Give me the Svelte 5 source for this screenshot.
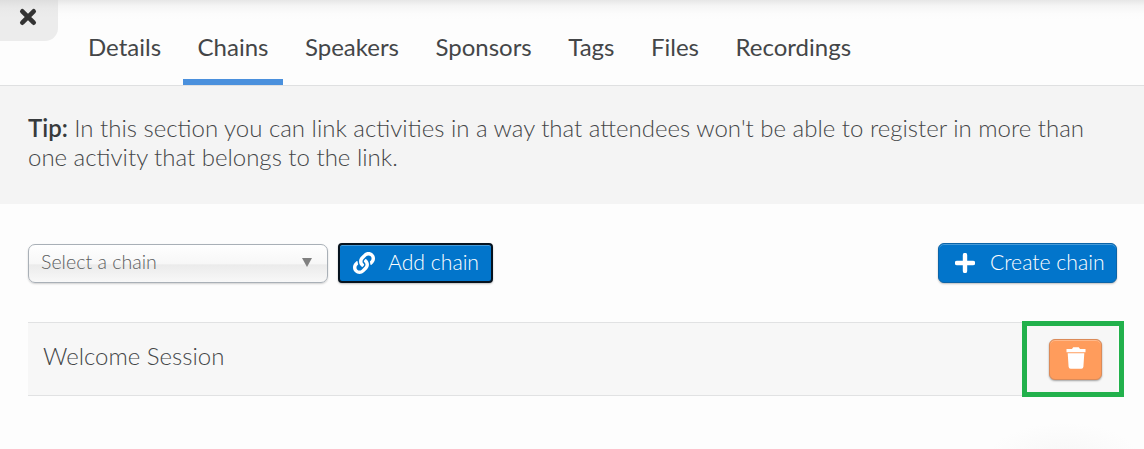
<script lang="ts">
  const tabs = ['Details', 'Chains', 'Speakers', 'Sponsors', 'Tags', 'Files', 'Recordings'];

  let activeTab = $state('Chains');
  let chains = $state(['Welcome Session']);

  function removeChain(name: string) {
    chains = chains.filter((chain) => chain !== name);
  }
</script>

<div class="panel">
  <header>
    <button class="close" aria-label="Close">
      <svg width="18" height="18" viewBox="0 0 18 18">
        <path d="M3.3 3.3 14.7 14.7M14.7 3.3 3.3 14.7" />
      </svg>
    </button>
    <nav>
      {#each tabs as tab}
        <button class="tab" class:active={tab === activeTab} onclick={() => (activeTab = tab)}>
          {tab}
        </button>
      {/each}
    </nav>
  </header>

  <p class="tip">
    <strong>Tip:</strong> In this section you can link activities in a way that attendees won't be able to register in more than one activity that belongs to the link.
  </p>

  <main>
    <div class="toolbar">
      <button class="select">
        <span>Select a chain</span>
        <svg width="10" height="9" viewBox="0 0 10 9"><path d="M0 0h10L5 9z" /></svg>
      </button>
      <button class="btn add">
        <svg width="22" height="22" viewBox="0 0 512 512">
          <path
            d="M326.612 185.391c59.747 59.809 58.927 155.698.36 214.59-.11.12-.24.25-.36.37l-67.2 67.2c-59.27 59.27-155.699 59.262-214.96 0-59.27-59.26-59.27-155.7 0-214.96l37.106-37.106c9.84-9.84 26.786-3.3 27.294 10.606.648 17.722 3.826 35.527 9.69 52.721 1.986 5.822.567 12.262-3.783 16.612l-13.087 13.087c-28.026 28.026-28.905 73.66-1.155 101.96 28.024 28.579 74.086 28.749 102.325.51l67.2-67.19c28.191-28.191 28.073-73.757 0-101.83-3.701-3.694-7.429-6.564-10.341-8.569a16.037 16.037 0 0 1-6.947-12.606c-.396-10.567 3.348-21.456 11.698-29.806l21.054-21.055c5.521-5.521 14.182-6.199 20.584-1.731a152.482 152.482 0 0 1 20.522 17.197zM467.547 44.449c-59.261-59.262-155.69-59.27-214.96 0l-67.2 67.2c-.12.12-.25.25-.36.37-58.566 58.892-59.387 154.781.36 214.59a152.454 152.454 0 0 0 20.521 17.196c6.402 4.468 15.064 3.789 20.584-1.731l21.054-21.055c8.35-8.35 12.094-19.239 11.698-29.806a16.037 16.037 0 0 0-6.947-12.606c-2.912-2.005-6.64-4.875-10.341-8.569-28.073-28.073-28.191-73.639 0-101.83l67.2-67.19c28.239-28.239 74.3-28.069 102.325.51 27.75 28.3 26.872 73.934-1.155 101.96l-13.087 13.087c-4.35 4.35-5.769 10.79-3.783 16.612 5.864 17.194 9.042 34.999 9.69 52.721.509 13.906 17.454 20.446 27.294 10.606l37.106-37.106c59.271-59.259 59.271-155.699.001-214.959z"
          />
        </svg>
        <span>Add chain</span>
      </button>
      <button class="btn create">
        <svg width="20" height="20" viewBox="0 0 20 20">
          <path d="M10 2v16M2 10h16" />
        </svg>
        <span>Create chain</span>
      </button>
    </div>

    <ul>
      {#each chains as chain}
        <li>
          <span>{chain}</span>
          <div class="highlight">
            <button class="delete" aria-label="Delete chain" onclick={() => removeChain(chain)}>
              <svg width="20" height="24" viewBox="0 0 20 24">
                <path d="M.5 3H6l1.2-1.8h5.6L14 3h5.5v3.2H.5zM1.7 7.3h16.6l-.9 13.5q-.2 2-2 2H4.6q-1.8 0-2-2z" />
              </svg>
            </button>
          </div>
        </li>
      {/each}
    </ul>
  </main>
</div>

<style>
  :global(body) {
    margin: 0;
    overflow: hidden;
    background: #fdfdfd;
  }

  .panel {
    height: 449px;
    box-sizing: border-box;
    font-family: Lato, sans-serif;
    font-weight: 300;
    color: #444648;
    background: radial-gradient(ellipse 75px 34px at 1064px 457px, #f7f7f7, #fdfdfd);
  }

  button {
    margin: 0;
    font: inherit;
    color: inherit;
    cursor: pointer;
  }

  header {
    display: flex;
    align-items: flex-start;
    height: 85px;
    border-bottom: 1px solid #dfe0e1;
    background: linear-gradient(#e6e6e6, #f5f5f5 6px, #fcfcfc 14px, #fdfdfd 20px);
  }

  .close {
    display: flex;
    width: 58px;
    height: 41px;
    padding: 8px 0 0 19px;
    border: 0;
    border-bottom-right-radius: 13px;
    background: linear-gradient(#dedede, #e9e9e9 8px, #ececec 18px);
  }

  .close path {
    fill: none;
    stroke: #333;
    stroke-width: 4.6;
    stroke-linecap: round;
  }

  nav {
    display: flex;
    gap: 7px;
    margin-left: 15.25px;
  }

  .tab {
    height: 85px;
    padding: 14px 14.75px 0;
    border: 0;
    border-bottom: 6px solid transparent;
    background: none;
    font-size: 24px;
    font-weight: 400;
  }

  .tab.active {
    border-bottom-color: #4a90dd;
  }

  .tip {
    height: 118px;
    box-sizing: border-box;
    margin: 0;
    padding: 27px 28px 0;
    background: #f4f4f4;
    font-size: 24px;
    line-height: 29px;
  }

  .tip strong {
    font-weight: 600;
    color: #373a3c;
  }

  main {
    padding: 39px 27px 0 28px;
  }

  .toolbar {
    display: flex;
    gap: 10px;
    height: 40px;
  }

  .select {
    display: flex;
    align-items: center;
    justify-content: space-between;
    width: 300px;
    height: 39px;
    margin-top: 1px;
    padding: 0 15px 3px 12px;
    border: 1px solid #a9b0b7;
    border-radius: 7px;
    background: linear-gradient(#fff 0%, #f7f7f7 50%, #ebebeb 54%, #f8f8f8 100%);
    box-shadow: 0 1px 2px rgba(0, 0, 0, 0.18);
    color: #5c5e60;
    font-size: 19.6px;
  }

  .select span {
    padding-bottom: 2px;
  }

  .select path {
    fill: #808080;
  }

  .btn {
    display: flex;
    align-items: center;
    height: 40px;
    border: 1px solid #0b64a8;
    border-radius: 6px;
    background: #0275cb;
    box-shadow: inset 0 1px 0 #479bd8, 0 1px 2px rgba(0, 0, 0, 0.25);
    color: #fff;
    font-size: 21.2px;
  }

  .btn span {
    padding-bottom: 1px;
  }

  .add {
    gap: 13px;
    width: 155px;
    padding: 0 0 1px 13px;
    border: 2px solid #06131f;
    border-radius: 4px;
  }

  .add path {
    fill: #fff;
  }

  .create {
    gap: 15px;
    width: 179px;
    margin-left: auto;
    padding: 0 0 1px 16px;
  }

  .create path {
    fill: none;
    stroke: #fff;
    stroke-width: 4.4;
    stroke-linecap: round;
  }

  ul {
    margin: 39px 0 0;
    padding: 0;
    list-style: none;
  }

  li {
    display: flex;
    align-items: center;
    justify-content: space-between;
    height: 72px;
    padding-left: 15px;
    border: solid #e1e2e3;
    border-width: 1px 0;
    background: #f7f7f7;
    font-size: 24px;
  }

  li span {
    padding-bottom: 8px;
  }

  .highlight {
    display: flex;
    align-items: center;
    box-sizing: border-box;
    width: 102px;
    height: 76px;
    margin-right: -7px;
    padding-left: 22px;
    border: 5px solid #22b14c;
    background: linear-gradient(90deg, #f7f7f7 90px, #fbfbfb 90px);
  }

  .delete {
    display: flex;
    align-items: flex-start;
    justify-content: center;
    width: 53px;
    height: 41px;
    padding: 6px 0 0;
    border: 1px solid #db8b59;
    border-radius: 6px;
    background: #ff9c5c;
    box-shadow: inset 0 1px 0 #ffb98b, 0 1px 2px rgba(0, 0, 0, 0.35);
  }

  .delete path {
    fill: #fff;
  }
</style>
